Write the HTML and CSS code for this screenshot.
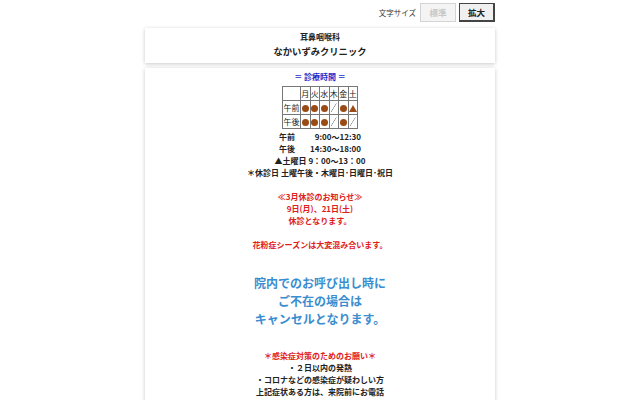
FILE: index.html
```html
<!DOCTYPE html>
<html lang="ja">
<head>
<meta charset="utf-8">
<link rel="stylesheet" href="styles.css">
</head>
<body>
<div class="wrap">
  <div class="sizebar">
    <span class="sizelabel">文字サイズ</span>
    <button class="sbtn off">標準</button>
    <button class="sbtn on">拡大</button>
  </div>
  <header class="card head">
    <div class="t1">耳鼻咽喉科</div>
    <div class="t2">なかいずみクリニック</div>
  </header>
  <main class="card body">
    <div class="blue-h">＝ 診療時間 ＝</div>
    <table class="sched">
      <tr><th class="c0"></th><th>月</th><th>火</th><th>水</th><th>木</th><th>金</th><th>土</th></tr>
      <tr><th class="c0">午前</th><td><i class="dot"></i></td><td><i class="dot"></i></td><td><i class="dot"></i></td><td class="sl"></td><td><i class="dot"></i></td><td><i class="tri"></i></td></tr>
      <tr><th class="c0">午後</th><td><i class="dot"></i></td><td><i class="dot"></i></td><td><i class="dot"></i></td><td class="sl"></td><td><i class="dot"></i></td><td class="sl"></td></tr>
    </table>
    <div class="hours">
      <div class="hrow"><span class="hl">午前</span><span class="hv">9:00〜12:30</span></div>
      <div class="hrow"><span class="hl">午後</span><span class="hv">14:30〜18:00</span></div>
      <div>▲土曜日 9：00〜13：00</div>
      <div>＊休診日 土曜午後・木曜日･日曜日･祝日</div>
    </div>
    <div class="red notice">
      <div>≪3月休診のお知らせ≫</div>
      <div>9日(月)、21日(土)</div>
      <div>休診となります。</div>
      <div class="gap">花粉症シーズンは大変混み合います。</div>
    </div>
    <div class="bigblue">
      <div>院内でのお呼び出し時に</div>
      <div>ご不在の場合は</div>
      <div>キャンセルとなります。</div>
    </div>
    <div class="infect">
      <div class="red">＊感染症対策のためのお願い＊</div>
      <div>・２日以内の発熱</div>
      <div>・コロナなどの感染症が疑わしい方</div>
      <div>上記症状ある方は、来院前にお電話</div>
    </div>
  </main>
</div>
</body>
</html>
```
FILE: styles.css
```css
html, body { margin: 0; padding: 0; background: #fff; }
body {
  font-family: "Noto Sans CJK JP", "Noto Sans", sans-serif;
  color: #222;
  font-weight: 700;
}
.wrap { width: 350px; margin: 0 auto; }
.sizebar {
  display: flex; justify-content: flex-end; align-items: center;
  height: 22px; padding-top: 1px; gap: 3px;
}
.sizelabel { font-size: 7.5px; font-weight: 400; color: #333; margin-right: 1px; }
.sbtn {
  font-family: inherit; font-size: 8.5px; font-weight: 700;
  width: 36px; height: 19px; padding: 0; margin: 0;
  background: #f4f4f4;
}
.sbtn.off { color: #c8c8c8; border: 1px solid #d4d4d4; }
.sbtn.on { color: #222; border: 1px solid #444; border-right-width: 2px; border-bottom-width: 2px; background: #f0f0f0; }
.card {
  background: #fff;
  box-shadow: 0 1px 4px rgba(0,0,0,0.22);
}
.head { margin-top: 5px; height: 35px; text-align: center; padding-top: 2px; box-sizing: border-box; }
.t1 { font-size: 8px; line-height: 14px; }
.t2 { font-size: 9.3px; line-height: 14px; }
.body { margin-top: 5px; padding-top: 3px; text-align: center; height: 340px; }
.blue-h { color: #1a2fc8; font-size: 8px; line-height: 12px; }
.sched {
  margin: 3px auto 0; border-collapse: collapse;
  font-size: 8px; font-weight: 400;
}
.sched th, .sched td {
  border: 1px solid #777; width: 8.5px; height: 13px; padding: 0;
  font-weight: 400; text-align: center; vertical-align: middle; line-height: 12px;
}
.sched .c0 { width: 17px; }
.dot { display: inline-block; width: 7px; height: 7px; border-radius: 50%; background: #9a4a14; vertical-align: middle; }
.tri { display: inline-block; width: 0; height: 0; border-left: 4px solid transparent; border-right: 4px solid transparent; border-bottom: 7px solid #9a4a14; vertical-align: middle; }
.sl { background: linear-gradient(to bottom right, transparent calc(50% - 0.6px), #888 50%, transparent calc(50% + 0.6px)); background-size: 70% 70%; background-repeat: no-repeat; background-position: center; }
.hours { font-size: 8px; line-height: 12px; margin-top: 2px; }
.hrow { display: flex; justify-content: center; white-space: nowrap; }
.hl { width: 30px; text-align: left; }
.hv { width: 52px; text-align: right; }
.red { color: #e02020; }
.notice { font-size: 8px; line-height: 12px; margin-top: 12px; }
.gap { margin-top: 12px; }
.bigblue { color: #3a8ed0; font-size: 12px; line-height: 18px; margin-top: 23px; }
.infect { font-size: 8px; line-height: 12px; margin-top: 22px; }
```
